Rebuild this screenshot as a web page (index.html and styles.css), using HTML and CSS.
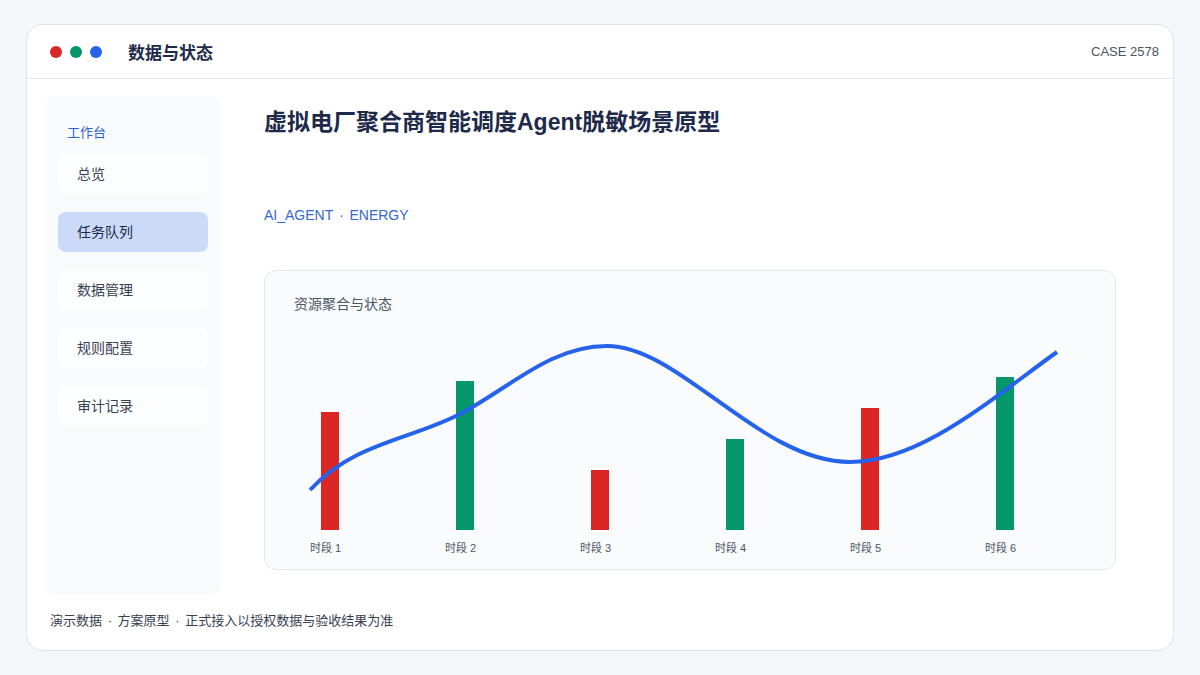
FILE: index.html
```html
<!DOCTYPE html>
<html lang="zh-CN">
<head>
    <meta charset="UTF-8">
    <title>数据与状态</title>
    <link rel="stylesheet" href="styles.css">
</head>
<body>

<div class="frame">
    <!-- Window bar -->
    <header class="topbar">
        <div class="dots">
            <span class="dot red"></span>
            <span class="dot green"></span>
            <span class="dot blue"></span>
        </div>
        <div class="app-title">数据与状态</div>
        <div class="case-no">CASE 2578</div>
    </header>

    <div class="workspace">
        <aside class="sidebar">
            <div class="side-label">工作台</div>
            <nav class="nav">
                <div class="nav-item">总览</div>
                <div class="nav-item active">任务队列</div>
                <div class="nav-item">数据管理</div>
                <div class="nav-item">规则配置</div>
                <div class="nav-item">审计记录</div>
            </nav>
        </aside>

        <main class="main">
            <h1 class="page-title">虚拟电厂聚合商智能调度Agent脱敏场景原型</h1>
            <div class="tags">AI_AGENT <span class="sep">·</span> ENERGY</div>

            <section class="chart-card">
                <div class="chart-title">资源聚合与状态</div>
                <svg class="chart" width="850" height="255" viewBox="265 313 850 255">
                    <rect x="321" y="412" width="18" height="118" fill="#dc2626"/>
                    <rect x="456" y="381" width="18" height="149" fill="#059669"/>
                    <rect x="591" y="470" width="18" height="60" fill="#dc2626"/>
                    <rect x="726" y="439" width="18" height="91" fill="#059669"/>
                    <rect x="861" y="408" width="18" height="122" fill="#dc2626"/>
                    <rect x="996" y="377" width="18" height="153" fill="#059669"/>

                    <path d="M310,490 C355,442 410,440 460,414 C510,388 550,346 607,346 C680,346 760,462 850,462 C920,462 990,400 1057,352"
                          fill="none" stroke="#2563eb" stroke-width="4"/>

                    <g class="axis">
                        <text x="310" y="552">时段 1</text>
                        <text x="445" y="552">时段 2</text>
                        <text x="580" y="552">时段 3</text>
                        <text x="715" y="552">时段 4</text>
                        <text x="850" y="552">时段 5</text>
                        <text x="985" y="552">时段 6</text>
                    </g>
                </svg>
            </section>
        </main>
    </div>

    <footer class="footnote">演示数据 <span class="sep">·</span> 方案原型 <span class="sep">·</span> 正式接入以授权数据与验收结果为准</footer>
</div>

</body>
</html>
```

FILE: styles.css
```css
/* General Styles */
body {
    margin: 0;
    padding: 24px 26px;
    background-color: #f5f7fa;
    font-family: "Liberation Sans", "Noto Sans CJK SC", sans-serif;
    color: #1f2a44;
}

.frame {
    background-color: #ffffff;
    border: 1px solid #dde2e9;
    border-radius: 16px;
    height: 625px;
    display: flex;
    flex-direction: column;
}

/* Window bar */
.topbar {
    height: 53px;
    border-bottom: 1px solid #e3e7ee;
    display: flex;
    align-items: center;
    padding: 0 14px 0 23px;
}

.dots {
    display: flex;
    gap: 8px;
}

.dot {
    width: 12px;
    height: 12px;
    border-radius: 50%;
}

.dot.red { background-color: #dc2626; }
.dot.green { background-color: #059669; }
.dot.blue { background-color: #2563eb; }

.app-title {
    margin-left: 26px;
    font-size: 17px;
    font-weight: bold;
    color: #1e2a4a;
}

.case-no {
    margin-left: auto;
    font-size: 13px;
    color: #4b5563;
}

/* Body */
.workspace {
    display: flex;
    gap: 43px;
    padding: 17px 57px 0 18px;
}

.sidebar {
    flex-shrink: 0;
    width: 150px;
    height: 499px;
    padding: 0 13px;
    background-color: #f8fafc;
    border-radius: 10px;
}

.side-label {
    padding: 26px 0 0 9px;
    height: 32px;
    font-size: 13px;
    color: #2f63d0;
}

.nav {
    display: flex;
    flex-direction: column;
    gap: 18px;
}

.nav-item {
    height: 40px;
    line-height: 40px;
    padding-left: 19px;
    border-radius: 8px;
    background-color: #fdfeff;
    font-size: 14px;
    color: #374151;
}

.nav-item.active {
    background-color: #cbdaf7;
    color: #1e2a4a;
}

.main {
    flex: 1;
    min-width: 0;
}

.page-title {
    margin: 12px 0 0;
    font-size: 23px;
    line-height: 28px;
    font-weight: bold;
    color: #1e2a4a;
}

.tags {
    margin-top: 70px;
    font-size: 14px;
    line-height: 18px;
    color: #3567d0;
}

.sep {
    margin: 0 2px;
}

.chart-card {
    margin-top: 46px;
    height: 300px;
    border: 1px solid #e3e7ee;
    border-radius: 12px;
    background-color: #f9fbfd;
    padding-top: 24px;
    box-sizing: border-box;
    overflow: hidden;
}

.chart-title {
    margin-left: 29px;
    font-size: 14px;
    line-height: 18px;
    color: #4b5563;
}

.chart {
    display: block;
}

.axis text {
    font-size: 11px;
    fill: #4b5563;
    font-family: "Liberation Sans", "Noto Sans CJK SC", sans-serif;
}

.footnote {
    margin-top: auto;
    padding: 0 0 21px 23px;
    font-size: 13px;
    color: #374151;
}
```
